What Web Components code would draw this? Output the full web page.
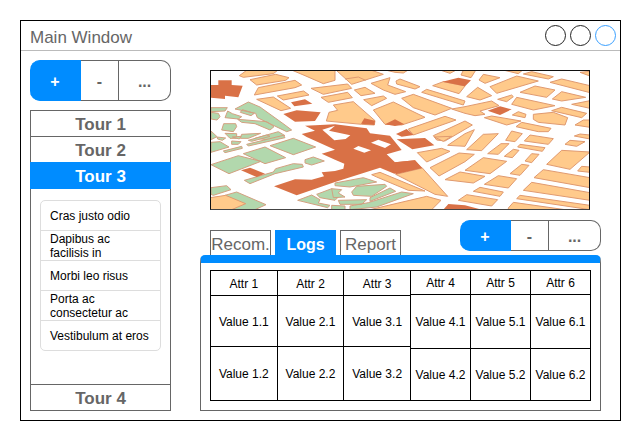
<!DOCTYPE html>
<html lang="en">
<head>
<meta charset="utf-8">
<title>Main Window</title>
<style>
  html { --blue: #008cff; --grey: #666; }
  body { margin: 20px; font: 12px/14px "Liberation Sans", Arial, sans-serif; color: #000; background: #fff; }
</style>
</head>
<body>
<app-window heading="Main Window">
  <tour-sidebar slot="side"></tour-sidebar>
  <city-map slot="main"></city-map>
  <detail-panel slot="main"></detail-panel>
</app-window>

<template id="t-window">
  <style>
    :host { display: flex; flex-direction: column; box-sizing: border-box; min-height: calc(100vh - 40px); border: 1px solid #000; }
    header { display: flex; align-items: center; gap: 4px; height: 29px; padding: 0 4px 0 9px; border-bottom: 1px solid #bbb; }
    h1 { flex: 1; margin: 0; padding-top: 4px; font-size: 17px; line-height: 20px; font-weight: 400; color: var(--grey); }
    header button { width: 21px; height: 21px; padding: 0; border: 1px solid #222; border-radius: 50%; background: none; }
    header button:last-child { border-color: #3aa0ff; }
    .body { flex: 1; display: flex; gap: 29px; padding: 9px 19px 9px 9px; }
    aside { flex: 0 0 141px; display: flex; }
    main { flex: 1; min-width: 0; display: flex; flex-direction: column; }
  </style>
  <header>
    <h1></h1>
    <button type="button" aria-label="Minimize"></button>
    <button type="button" aria-label="Maximize"></button>
    <button type="button" aria-label="Close"></button>
  </header>
  <div class="body">
    <aside><slot name="side"></slot></aside>
    <main><slot name="main"></slot></main>
  </div>
</template>

<template id="t-group">
  <style>
    :host { display: flex; width: 141px; height: var(--group-height, 41px); }
    button { box-sizing: border-box; padding: 3px 0 0; font: bold 16px/18px "Liberation Sans", Arial, sans-serif; color: var(--grey); background: #fff; border: 1px solid var(--grey); border-left-width: 0; }
    .add { flex: 51; color: #fff; background: var(--blue); border-color: var(--blue); border-radius: 10px 0 0 10px; }
    .remove { flex: 38; }
    .more { flex: 52; border-radius: 0 10px 10px 0; }
  </style>
  <button type="button" class="add">+</button>
  <button type="button" class="remove">-</button>
  <button type="button" class="more">...</button>
</template>

<template id="t-side">
  <style>
    :host { flex: 1; display: flex; flex-direction: column; gap: 9px; }
    .tours { flex: 1; display: flex; flex-direction: column; border: 1px solid var(--grey); }
    tour-row + tour-row, tour-row.last { border-top: 1px solid var(--grey); }
    .stops { flex: 1; padding: 11px 9px; }
    ul { margin: 0; padding: 0; list-style: none; border: 1px solid #ddd; border-radius: 5px; }
    li { display: flex; align-items: center; box-sizing: border-box; height: 30px; padding: 1px 9px 0; }
    li:first-child { height: 29px; }
    li + li { border-top: 1px solid #ddd; }
  </style>
  <button-group></button-group>
  <div class="tours">
    <tour-row>Tour 1</tour-row>
    <tour-row>Tour 2</tour-row>
    <tour-row active>Tour 3</tour-row>
    <div class="stops">
      <ul>
        <li>Cras justo odio</li>
        <li>Dapibus ac<br>facilisis in</li>
        <li>Morbi leo risus</li>
        <li>Porta ac<br>consectetur ac</li>
        <li>Vestibulum at eros</li>
      </ul>
    </div>
    <tour-row class="last">Tour 4</tour-row>
  </div>
</template>

<template id="t-row">
  <style>
    :host { display: block; }
    button { display: block; width: 100%; height: 25px; padding: 2px 0 0; border: 0; background: none; color: var(--grey); font: bold 17px/20px "Liberation Sans", Arial, sans-serif; }
    :host([active]) { margin: 0 -1px; border-color: var(--blue) !important; border-bottom: 1px solid var(--blue); background: var(--blue); }
    :host([active]) button { color: #fff; }
  </style>
  <button type="button"><slot></slot></button>
</template>

<template id="t-panel">
  <style>
    :host { flex: 1; display: flex; flex-direction: column; margin-top: 10px; }
    .bar { display: flex; justify-content: space-between; align-items: flex-start; --group-height: 31px; }
    .tabs { display: flex; gap: 4px; padding: 10px 0 0 10px; }
    .tabs button { box-sizing: border-box; width: 61px; height: 25px; padding: 3px 0 0; border: 1px solid var(--grey); border-bottom: 0; background: #fff; color: var(--grey); font: 17px/20px "Liberation Sans", Arial, sans-serif; }
    .tabs button[aria-selected=true] { background: var(--blue); border-color: var(--blue); color: #fff; font-weight: bold; font-size: 16px; }
    .panel { flex: 1; display: flex; flex-direction: column; border: 1px solid var(--grey); border-top: 8px solid var(--blue); border-radius: 5px 5px 0 0; }
    .tables { flex: 1; display: flex; padding: 7px 9px 9px; }
    attr-table { flex: 180; }
    attr-table:first-child { flex: 201; --left: 1px; --head: 25px; --first: 51px; }
  </style>
  <div class="bar">
    <div class="tabs" role="tablist">
      <button type="button" role="tab" aria-selected="false">Recom.</button>
      <button type="button" role="tab" aria-selected="true">Logs</button>
      <button type="button" role="tab" aria-selected="false">Report</button>
    </div>
    <button-group></button-group>
  </div>
  <div class="panel">
    <div class="tables">
      <attr-table from="1"></attr-table>
      <attr-table from="4"></attr-table>
    </div>
  </div>
</template>

<template id="t-table">
  <style>
    :host { display: flex; min-width: 0; }
    table { flex: 1; table-layout: fixed; width: 100%; border-spacing: 0; border: solid #000; border-width: 1px 0 0 var(--left, 0); }
    th, td { box-sizing: border-box; padding: 1px 0 0; border: solid #000; border-width: 0 1px 1px 0; font-weight: 400; text-align: center; white-space: nowrap; }
    th { height: var(--head, 24px); }
    tr:nth-child(2) td { height: var(--first, 54px); }
  </style>
  <table><tbody></tbody></table>
</template>

<template id="t-map">
  <style>
    :host { display: block; box-sizing: border-box; margin: 10px 11px 0 10px; border: 1px solid #111; border-bottom-color: #444; }
    svg { display: block; width: 100%; height: 138px; }
    path { stroke-width: 3; }
    .o { fill: #ffca8b; stroke: #e09a70; }
    .g { fill: #b2d8ad; stroke: #d3a080; }
    .b { fill: #d97146; stroke: none; }
    .w { fill: #fff; stroke: none; }
  </style>
  <svg viewBox="18 18 1134 414" preserveAspectRatio="none" role="img" aria-label="City map">
    <g>
      <path class="o" d="M125 16L103 32 115 37 205 26 218 16zM135 44L212 28 252 38 242 46 155 60zM148 90L160 68 270 46 290 60 270 68zM217 93L296 78 312 90 235 105zM155 103L205 96 257 130 228 137zM262 16L390 16 390 46 355 56 300 32z"/>
      <path class="b" d="M18 60H40V46H80V60L113 62 100 97 60 92V102L18 98zM258 112L300 103 322 116 268 124zM235 147L275 136 347 142 330 168 270 170z"/>
      <path class="g" d="M130 111L165 126 240 180 260 195 245 200 157 158 152 145 90 132zM18 128L67 128 60 138 18 140zM18 142L40 145 45 155 36 165 18 162zM68 138L82 146 110 155 100 162 60 158zM56 176L92 176 95 185 85 200 50 195zM112 134L148 145 138 152 106 142zM98 163L185 170 207 185 195 195 150 176 110 172zM60 205L95 206 95 220 75 220zM110 208L167 205 130 220 106 220zM150 220L220 200 240 212 195 225zM18 198L36 215 18 224z"/>
    </g>
    <g transform="translate(390 0)">
      <path class="o" d="M4 16L110 16 145 28 50 58zM30 42L70 36 92 46M-72 70L38 57 50 70 -35 88zM-42 97L38 82 52 98 -20 112zM-26 168L-18 142 8 136 -5 120 55 110 120 167 118 180 80 178zM108 55L165 38 158 60 212 80 180 88 145 75zM183 48L195 42 255 65 240 72 185 57zM155 16L180 22 205 24 218 16zM58 75L90 67 120 85 78 92zM86 104L145 93 155 100 110 122zM115 135L175 111 270 157 200 180 150 178zM200 100L235 88 350 130 300 150 235 128zM260 82L275 73 390 108 385 120zM293 62L325 50 390 63 372 86zM220 192L330 154 363 165 235 210zM295 212L390 168 412 180 330 228 305 225zM318 16L345 25 362 16z"/>
      <path class="b" d="M150 178L180 163 208 178 180 183zM78 176L88 160 120 167 118 180zM322 50L370 38 408 46 390 64zM183 207L215 192 236 210 200 215z"/>
    </g>
    <g transform="translate(780 0)">
      <path class="o" d="M-12 30L-5 16 32 16 18 38zM55 28L105 38 60 55 42 45zM75 65L155 33 220 48 95 85zM118 16L160 26 172 16zM175 27L200 20 265 35 250 42zM255 52L290 42 375 62 375 83zM165 82L210 63 270 75 245 97zM345 22L375 19 375 33zM5 95L38 67 80 92 45 105zM98 103L140 90 145 95 125 110zM140 118L155 97 270 122 205 135zM262 102L290 80 362 97 290 108zM320 118L375 107 375 130zM260 137L290 127 365 145 350 158zM-40 132L0 125 80 108 102 122 45 138 60 148 30 152 0 145zM142 150L160 140 183 148 180 158zM58 158L80 153 168 168 125 180zM205 148L265 142 308 158 300 180 220 172 205 163zM153 185L170 172 258 190 250 200 220 200zM330 180L355 165 375 165 375 187zM328 213L345 207 375 210 375 222z"/>
      <path class="b" d="M68 137L105 124 140 133 105 150z"/>
    </g>
    <g>
      <path class="b" d="M300 182L390 178 485 190 495 205 555 212 590 255 545 268 570 292 630 286 650 309 568 326 525 308 390 351 275 391 207 364 270 343 320 344 357 334 350 322 390 318 415 311 418 296 390 284 350 266 390 254 305 216 290 207 330 197zM575 223L660 219 688 241 622 253z"/>
      <path class="w" d="M445 251L460 243 498 256 478 263zM498 233L520 224 558 238 540 249zM352 194L390 182 372 197 436 211 422 222 388 226z"/>
    </g>
    <g transform="translate(0 216)">
      <path class="g" d="M18 16L45 14 72 30 18 46zM36 0L62 3 52 10 38 6zM80 12L108 14 100 22 80 22zM55 42L110 28 112 34 60 47zM82 0L108 -2 103 6zM125 22L235 -5 240 2 130 27zM130 10L185 -6 195 -2 140 13zM195 26L265 4 332 30 265 53zM115 50L180 30 242 62 180 80zM18 83L100 56 168 73 72 110zM118 130L205 105 212 95 265 80 292 82 295 90 210 110 135 140zM300 68L325 60 358 72 320 84 300 78zM18 152L65 146 78 158 25 175 18 172zM60 175L95 165 183 203 150 218 60 218zM278 190L320 174 345 188 340 198 375 205 368 212zM335 172L380 155 400 180 390 190 345 182z"/>
      <path class="b" d="M108 100L135 92 180 110 155 120z"/>
      <path class="o" d="M16 182L62 175 122 200 80 218 16 218z"/>
    </g>
    <g transform="translate(390 216)">
      <path class="g" d="M0 138L85 122 125 135 45 150 0 146zM50 165L65 148 150 142 155 148 110 178 55 175zM105 182L165 153 182 163 105 193zM-10 155L20 158 10 168 30 180 -5 182zM10 190L95 188 80 202 15 202zM45 207L100 197 200 165 235 170 125 210 45 218zM-10 205L30 207 30 218 -10 218z"/>
      <path class="o" d="M110 113L135 106 270 162 220 160 125 120zM182 112L262 93 338 178 300 172zM105 218L275 178 318 190 290 218zM247 47L320 34 345 43 275 75zM285 92L372 48 418 52 390 74 312 117zM298 0L325 13 350 -2zM338 25L390 -10 418 -22 390 28zM330 128L375 105 450 118 415 138zM370 190L395 173 488 188 470 207zM395 38L445 -8 490 -10 440 41z"/>
      <path class="b" d="M182 112L262 93 240 70 180 76zM340 201L390 205 440 218 325 218z"/>
    </g>
    <g transform="translate(780 216)">
      <path class="o" d="M68 50L108 20 132 20 100 52zM118 58L145 37 162 40 142 62zM122 10L140 -18 172 -10 150 14zM158 30L165 22 240 32 232 43zM178 12L195 -6 265 5 250 22zM180 72L200 50 222 52 200 77zM135 110L170 82 192 85 165 115zM0 100L55 62 125 73 75 110zM58 142L100 116 155 125 130 153zM25 163L45 151 115 165 105 178zM245 82L290 40 375 45 315 97zM300 22L315 10 360 14 335 28zM207 122L235 98 375 122 375 152zM175 160L200 136 375 167 375 190zM155 185L165 175 375 205 375 218zM130 213L145 196 300 218 130 218zM338 102L350 88 375 90 375 106z"/>
    </g>
  </svg>
</template>

<script>
  class Base extends HTMLElement {
    constructor() {
      super();
      const t = document.getElementById(this.constructor.template);
      this.attachShadow({ mode: 'open' }).append(document.importNode(t.content, true));
    }
  }
  customElements.define('button-group', class extends Base { static template = 't-group'; });
  customElements.define('tour-row', class extends Base { static template = 't-row'; });
  customElements.define('city-map', class extends Base { static template = 't-map'; });
  customElements.define('attr-table', class extends Base {
    static template = 't-table';
    connectedCallback() {
      const first = Number(this.getAttribute('from'));
      const cols = [first, first + 1, first + 2];
      const row = (tag, text) => '<tr>' + cols.map(c => `<${tag}>${text(c)}</${tag}>`).join('') + '</tr>';
      this.shadowRoot.querySelector('tbody').innerHTML =
        row('th', c => `Attr ${c}`) + row('td', c => `Value ${c}.1`) + row('td', c => `Value ${c}.2`);
    }
  });
  customElements.define('tour-sidebar', class extends Base { static template = 't-side'; });
  customElements.define('detail-panel', class extends Base { static template = 't-panel'; });
  customElements.define('app-window', class extends Base {
    static template = 't-window';
    connectedCallback() { this.shadowRoot.querySelector('h1').textContent = this.getAttribute('heading'); }
  });
</script>
</body>
</html>
